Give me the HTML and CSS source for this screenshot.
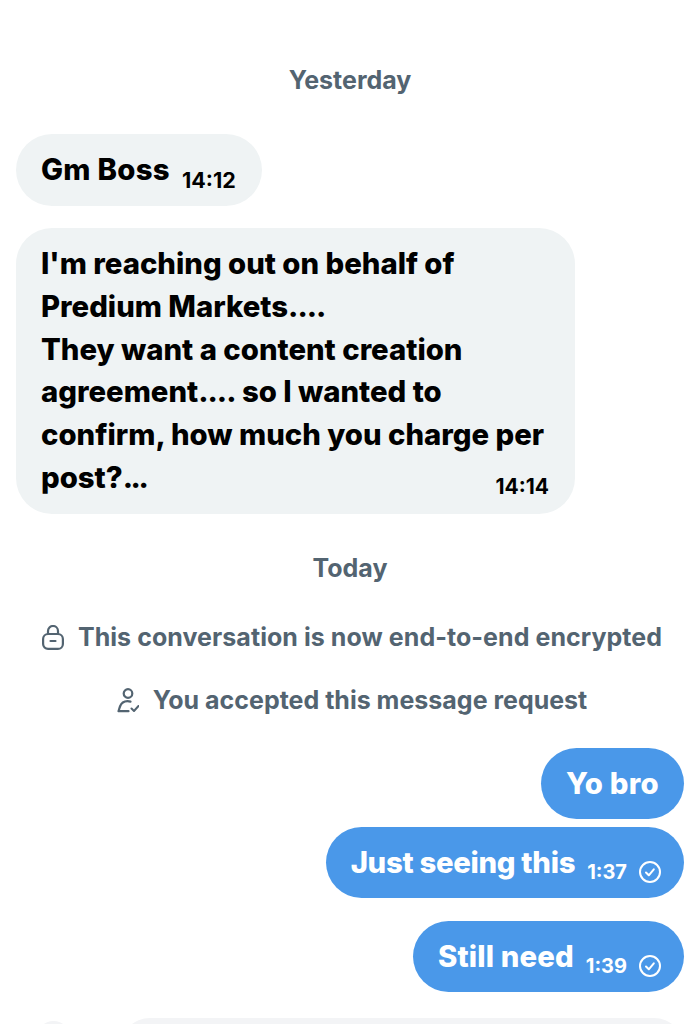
FILE: index.html
```html
<!DOCTYPE html>
<html lang="en">
<head>
    <meta charset="UTF-8">
    <meta name="viewport" content="width=device-width, initial-scale=1.0">
    <title>Messages</title>
    <link rel="stylesheet" href="styles.css">
</head>
<body>
<div class="thread">
    <div class="day day-first">Yesterday</div>

    <div class="row row-in row-gm">
        <div class="bubble bubble-in bubble-short">
            <span class="msg">Gm Boss</span>
            <span class="time">14:12</span>
        </div>
    </div>

    <div class="row row-in row-pitch">
        <div class="bubble bubble-in bubble-long">
            <div class="msg">I'm reaching out on behalf of<br>Predium Markets<span class="dots">....</span><br>They want a content creation<br>agreement<span class="dots">....</span> so I wanted to<br>confirm, how much you charge per<br>post?<span class="dots dots-tight">...</span></div>
            <span class="time time-corner">14:14</span>
        </div>
    </div>

    <div class="day day-today">Today</div>

    <div class="notice notice-lock">
        <svg class="notice-icon" width="22" height="25" viewBox="0 0 22 25" fill="none" stroke="#536471" stroke-width="2.200">
            <path d="M6 10V6a5 5 0 0 1 10 0v4"/>
            <rect x="1.100" y="9" width="19.800" height="14.900" rx="5"/>
            <path d="M8.500 16h5" stroke-linecap="round"/>
        </svg>
        <span>This conversation is now end-to-end encrypted</span>
    </div>

    <div class="notice notice-accept">
        <svg class="notice-icon" width="22" height="25" viewBox="0 0 22 25" fill="none" stroke="#536471" stroke-width="2.200" stroke-linecap="round" stroke-linejoin="round">
            <circle cx="11" cy="5.500" r="4.300"/>
            <path d="M13.500 13.600c-1-.3-1.900-.4-3-.4-4 0-6.300 2-7.500 5.300-.5 1.400-1.500 4.700-1.500 4.700h10"/>
            <path d="M14.500 20.500l2.500 2.500 4.500-5" stroke-width="2"/>
        </svg>
        <span>You accepted this message request</span>
    </div>

    <div class="row row-out row-yo">
        <div class="bubble bubble-out"><span class="msg msg-yo">Yo bro</span></div>
    </div>

    <div class="row row-out row-seen">
        <div class="bubble bubble-out bubble-sent">
            <span class="msg msg-seen">Just seeing this</span>
            <span class="time">1:37</span>
            <svg class="tick" width="22" height="22" viewBox="0 0 22 22" fill="none" stroke="#fff" stroke-width="2" stroke-linecap="round" stroke-linejoin="round">
                <circle cx="11" cy="11" r="10"/>
                <path d="M7 11.500l2.800 2.800 5-6"/>
            </svg>
        </div>
    </div>

    <div class="row row-out row-need">
        <div class="bubble bubble-out bubble-sent">
            <span class="msg msg-need">Still need</span>
            <span class="time">1:39</span>
            <svg class="tick" width="22" height="22" viewBox="0 0 22 22" fill="none" stroke="#fff" stroke-width="2" stroke-linecap="round" stroke-linejoin="round">
                <circle cx="11" cy="11" r="10"/>
                <path d="M7 11.500l2.800 2.800 5-6"/>
            </svg>
        </div>
    </div>

    <div class="composer">
        <div class="composer-btn"></div>
        <div class="composer-input"></div>
    </div>
</div>
</body>
</html>
```

FILE: styles.css
```css
html, body {
    margin: 0;
    padding: 0;
    background-color: #fff;
}

body {
    font-family: 'Inter', 'Liberation Sans', sans-serif;
    color: #0f1419;
}

.thread {
    display: flex;
    flex-direction: column;
    box-sizing: border-box;
    height: 1024px;
    padding: 0 16px;
    overflow: hidden;
}

.day {
    color: #536471;
    font-size: 25px;
    font-weight: 700;
    line-height: 30px;
    text-align: center;
}

.day-first {
    margin-top: 65px;
}

.day-today {
    margin-top: 39px;
}

.row {
    display: flex;
}

.row-in {
    justify-content: flex-start;
}

.row-out {
    justify-content: flex-end;
}

.row-gm {
    margin-top: 39px;
}

.row-pitch {
    margin-top: 22px;
}

.row-yo {
    margin-top: 33px;
}

.row-seen {
    margin-top: 8px;
}

.row-need {
    margin-top: 23px;
}

.bubble {
    display: flex;
    align-items: center;
    height: 72px;
    box-sizing: border-box;
    padding: 0 25px;
    border-radius: 36px;
}

.bubble-in {
    background-color: #eff3f4;
    color: #000;
}

.bubble-out {
    height: 71px;
    background-color: #4a98e9;
    color: #fff;
}

.bubble-short {
    padding-right: 26px;
    padding-bottom: 2px;
}

.bubble-short .msg {
    letter-spacing: 0.3px;
}

.bubble-short .time {
    margin-top: 21px;
    margin-left: 12px;
    font-size: 21.500px;
}

.bubble-sent {
    padding-right: 23px;
}

.bubble-sent .time {
    margin-left: 12px;
    font-size: 20px;
}

.bubble-long {
    position: relative;
    display: block;
    width: 559px;
    height: 286px;
    padding: 15px 25px 0;
}

.msg {
    font-size: 29.300px;
    font-weight: 800;
    line-height: 43px;
}

.bubble-long .msg {
    line-height: 42.800px;
}

.msg-yo {
    letter-spacing: 0.300px;
}

.msg-seen {
    letter-spacing: -0.300px;
}

.msg-need {
    letter-spacing: 0.150px;
}

.dots {
    letter-spacing: -1px;
}

.dots-tight {
    letter-spacing: -2.500px;
}

.time {
    margin: 19px 0 0 13px;
    font-size: 21px;
    font-weight: 700;
    line-height: 24px;
}

.time-corner {
    position: absolute;
    right: 26px;
    bottom: 15px;
    margin: 0;
}

.tick {
    flex-shrink: 0;
    margin: 19px 0 0 12px;
}

.notice {
    display: flex;
    justify-content: center;
    align-items: center;
    gap: 14px;
    padding-left: 4px;
    color: #536471;
    font-size: 25px;
    font-weight: 700;
    line-height: 30px;
}

.notice-lock {
    margin-top: 39px;
    letter-spacing: 0.060px;
}

.notice-accept {
    margin-top: 33px;
}

.composer {
    display: flex;
    gap: 50px;
    margin: 26px 0 0 21px;
}

.composer-btn {
    flex-shrink: 0;
    width: 33px;
    height: 33px;
    margin-top: 3px;
    border-radius: 50%;
    background-color: #f3f4f6;
}

.composer-input {
    flex: 1;
    height: 60px;
    border-radius: 30px;
    background-color: #f3f4f6;
}
```
